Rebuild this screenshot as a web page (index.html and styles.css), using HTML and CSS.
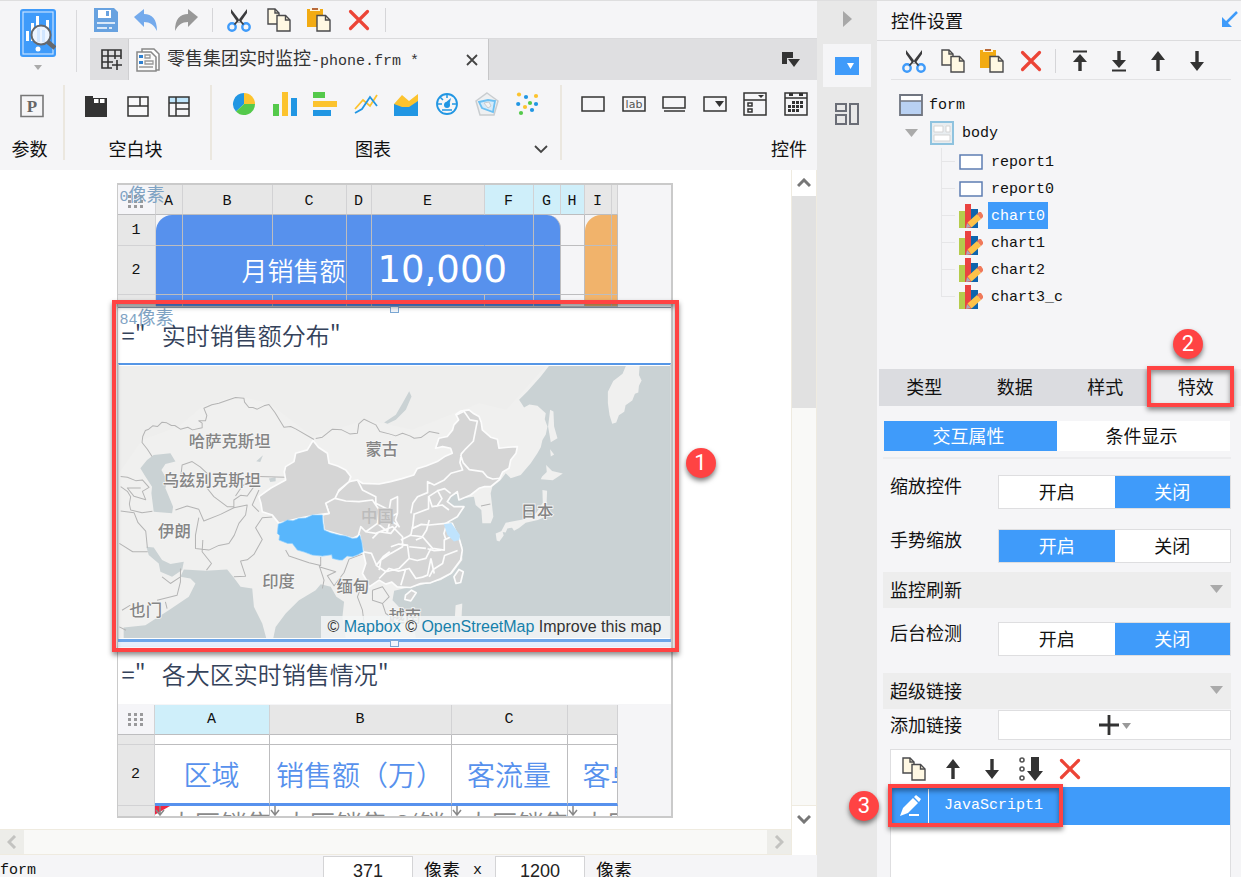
FILE: index.html
```html
<!DOCTYPE html>
<html lang="zh-CN">
<head>
<meta charset="utf-8">
<title>控件设置</title>
<link rel="stylesheet" href="styles.css">
</head>
<body>
<svg class="defs" aria-hidden="true">
  <symbol id="cut" viewBox="0 0 24 24"><path d="M4 1v4l7 10 3-1zM20 1v4l-7 10-3-1z" fill="#3c3c3e"/><circle cx="5" cy="19" r="3.700" fill="none" stroke="#3f9bfa" stroke-width="2.400"/><circle cx="19" cy="19" r="3.700" fill="none" stroke="#3f9bfa" stroke-width="2.400"/><path d="M7.500 16.500l4-4.500M16.500 16.500l-4-4.500" stroke="#3c3c3e" stroke-width="1.800"/></symbol>
  <symbol id="copy" viewBox="0 0 24 24"><path d="M1 1h7l4 4v11H1z" fill="#fff8e3" stroke="#4a4a4c" stroke-width="1.400"/><path d="M8 1v4h4" fill="none" stroke="#4a4a4c" stroke-width="1.400"/><path d="M10 7.500h8.500l4.500 4.500v11H10z" fill="#fff8e3" stroke="#4a4a4c" stroke-width="1.400"/><path d="M18.500 7.500V12H23" fill="none" stroke="#4a4a4c" stroke-width="1.400"/></symbol>
  <symbol id="paste" viewBox="0 0 24 24"><path d="M0 1h16v18H0z" fill="#f2ab13"/><path d="M3 0h10v3H3z" fill="#fff3d6"/><path d="M5 0h6v2H5z" fill="#b8683a"/><path d="M10 7.500h8.500l4.500 4.500v11H10z" fill="#fff8e3" stroke="#4a4a4c" stroke-width="1.400"/><path d="M18.500 7.500V12H23" fill="none" stroke="#4a4a4c" stroke-width="1.400"/></symbol>
  <symbol id="delete" viewBox="0 0 24 24"><path d="M3.500 3.500l17 17M20.500 3.500l-17 17" stroke="#ec4436" stroke-width="3.200" stroke-linecap="round"/></symbol>
  <symbol id="up" viewBox="0 0 24 24"><path d="M12 2l7 9h-5.300v11h-3.400V11H5z" fill="#333"/></symbol>
  <symbol id="down" viewBox="0 0 24 24"><path d="M12 22l7-9h-5.300V2h-3.400v11H5z" fill="#333"/></symbol>
  <symbol id="top" viewBox="0 0 24 24"><path d="M5 1.500h14v2H5zM12 5l7 8h-5.300v9h-3.400v-9H5z" fill="#333"/></symbol>
  <symbol id="bottom" viewBox="0 0 24 24"><path d="M5 20.500h14v2H5zM12 19l7-8h-5.300V2h-3.400v9H5z" fill="#333"/></symbol>
  <symbol id="dots" viewBox="0 0 18 14"><g fill="#9a9a9c"><path d="M1 0h3v3H1zM7 0h3v3H7zM13 0h3v3h-3zM1 5h3v3H1zM7 5h3v3H7zM13 5h3v3h-3zM1 10h3v3H1zM7 10h3v3H7zM13 10h3v3h-3z"/></g></symbol>
  <symbol id="chart" viewBox="0 0 24 24"><path d="M0 7h6v17H0z" fill="#b5cc4c"/><path d="M6 0h6v24H6z" fill="#ea4340"/><path d="M12 5h7v19h-7z" fill="#0e64ad"/><path d="M7 24l1-5 4 4z" fill="#aab"/><path d="M8.500 18.500L18 10l4 5-9.500 8.500z" fill="#fdc249"/><path d="M18 10l2-2h2l2 3v2l-2 2z" fill="#f0795a"/></symbol>
  <symbol id="frame" viewBox="0 0 24 16"><path d="M1 1h22v14H1z" fill="#fff" stroke="#5d7db3" stroke-width="1.500"/></symbol>
  <symbol id="tick" viewBox="0 0 10 10"><path d="M5 0v8M1 4l4 5 4-5" fill="none" stroke="#888" stroke-width="1.500"/></symbol>
</svg>

<div class="app">
  <main class="designer">
    <header class="top">
      <div class="preview">
        <button class="icon-btn" aria-label="预览">
          <svg width="36" height="62" viewBox="0 0 36 62"><rect width="36" height="48" rx="3" fill="#3f9bfa"/><rect x="3" y="3" width="30" height="42" fill="none" stroke="#c4e0ff" stroke-width="1.200"/><g fill="#fff"><path d="M6 22h3v10H6zM11 14h3v18h-3zM16 7h3v25h-3zM21 18h3v14h-3zM26 11h3v21h-3z"/><circle cx="18" cy="40" r="2.500"/></g><circle cx="21" cy="26" r="9.500" fill="#eef5ff" stroke="#65686d" stroke-width="2"/><path d="M17 19h3v14h-3zM22 21h3v12h-3z" fill="#d2e6ff"/><path d="M28 33l7 6" stroke="#65686d" stroke-width="4.500"/><path d="M14 56h8l-4 5z" fill="#aaa"/></svg>
        </button>
      </div>
      <div class="top-right">
        <div class="quick">
          <button class="icon-btn" aria-label="保存"><svg class="i24" viewBox="0 0 24 24"><path d="M0 0h20l4 4v20H0z" fill="#68a2e0"/><path d="M4 2h13v8H4z" fill="#fff"/><path d="M12 3h3v5h-3z" fill="#68a2e0"/><path d="M3 15h18M3 20h10M15 20h3" stroke="#fff" stroke-width="1.500"/></svg></button>
          <button class="icon-btn" aria-label="撤销"><svg class="i24" viewBox="0 0 24 24"><path d="M0 9l10-8v5c8 0 13 5 13 17-3-6-7-9-13-9v5z" fill="#74aaec"/></svg></button>
          <button class="icon-btn" aria-label="重做"><svg class="i24" viewBox="0 0 24 24"><path d="M24 9L14 1v5C6 6 1 11 1 23c3-6 7-9 13-9v5z" fill="#989898"/></svg></button>
          <span class="vsep"></span>
          <button class="icon-btn" aria-label="剪切"><svg class="i24"><use href="#cut"/></svg></button>
          <button class="icon-btn" aria-label="复制"><svg class="i24"><use href="#copy"/></svg></button>
          <button class="icon-btn" aria-label="粘贴"><svg class="i24"><use href="#paste"/></svg></button>
          <button class="icon-btn" aria-label="删除"><svg class="i24"><use href="#delete"/></svg></button>
          <span class="vsep"></span>
        </div>
        <div class="filetabs">
          <button class="icon-btn newtab" aria-label="新建"><svg width="22" height="22" viewBox="0 0 22 22"><path d="M11 19H1V1h19v9M1 7h19M1 13h11M7 1v18M14 1v9M16 11v10M11 16h10" fill="none" stroke="#333" stroke-width="1.600"/></svg></button>
          <div class="filetab">
            <svg class="i24" viewBox="0 0 24 24"><path d="M6 4V1h12l5 5v16h-3" fill="#fff" stroke="#888" stroke-width="1.500"/><path d="M1 4h14l5 5v14H1z" fill="#fafafa" stroke="#888" stroke-width="1.500"/><path d="M3 7h4v3H3zM3 13h4v3H3z" fill="#2f80d0"/><path d="M9 7h5v3H9zM9 13h8v3H9zM3 19h14" fill="none" stroke="#999" stroke-width="1.300"/></svg>
            <span class="fname">零售集团实时监控<span class="mono">-phone.frm *</span></span>
            <button class="icon-btn" aria-label="关闭"><svg width="12" height="12" viewBox="0 0 12 12"><path d="M1 1l10 10M11 1L1 11" stroke="#444" stroke-width="1.800"/></svg></button>
          </div>
          <button class="icon-btn tablist" aria-label="标签列表"><svg width="18" height="16" viewBox="0 0 18 16"><path d="M0 0h11v6H5v6H0z" fill="#333"/><path d="M6 7h12l-6 8z" fill="#333"/></svg></button>
        </div>
      </div>
    </header>

    <section class="ribbon">
      <div class="group g-param">
        <div class="icons"><svg class="i24" viewBox="0 0 24 24"><path d="M1 1.500h22v21H1z" fill="none" stroke="#777" stroke-width="1.600"/><text class="p-glyph" x="12" y="18" text-anchor="middle">P</text></svg></div>
        <div class="gname">参数</div>
      </div>
      <div class="group g-blank">
        <div class="icons">
          <svg class="i24" viewBox="0 0 24 24"><path d="M1 2h8v2h14v19H1z" fill="#333"/><path d="M10 5h4.500v4H10zM16 5h4.500v4H16z" fill="#fff"/></svg>
          <svg class="i24" viewBox="0 0 24 24"><path d="M2 3h20v19H2zM2 12h20M14 3v9" fill="#f8f8fa" stroke="#333" stroke-width="1.500"/></svg>
          <svg class="i24" viewBox="0 0 24 24"><path d="M2 3h20v6H2z" fill="#bfe5fb"/><path d="M2 3h20v19H2zM2 9h20M9 3v19M9 15h13" fill="none" stroke="#333" stroke-width="1.500"/></svg>
        </div>
        <div class="gname">空白块</div>
      </div>
      <div class="group g-chart">
        <div class="icons">
          <svg class="i24" viewBox="0 0 24 24"><path d="M12 12V1a11 11 0 00-8 18.500z" fill="#2196e3"/><path d="M12 12V1a11 11 0 0111 11z" fill="#fcc32e"/><path d="M12 12h11A11 11 0 014 19.500z" fill="#54c94b"/></svg>
          <svg class="i24" viewBox="0 0 24 24"><path d="M0 12h6v12H0z" fill="#54c94b"/><path d="M9 0h6v24H9z" fill="#fcc32e"/><path d="M18 6h6v18h-6z" fill="#2196e3"/></svg>
          <svg class="i24" viewBox="0 0 24 24"><path d="M0 0h12v6H0z" fill="#54c94b"/><path d="M0 9h24v6H0z" fill="#fcc32e"/><path d="M0 18h18v6H0z" fill="#2196e3"/></svg>
          <svg class="i24" viewBox="0 0 24 24"><path d="M1 17l8-9 7 6 7-11" fill="none" stroke="#fcc32e" stroke-width="1.800"/><path d="M1 21l7-4 8-12 7 9" fill="none" stroke="#2196e3" stroke-width="1.800"/></svg>
          <svg class="i24" viewBox="0 0 24 24"><path d="M0 12l8-9 7 6 9-7v22H0z" fill="#fcc32e"/><path d="M0 12l8 3 7 0 9-6v15H0z" fill="#2196e3"/></svg>
          <svg class="i24" viewBox="0 0 24 24"><circle cx="12" cy="12" r="10" fill="none" stroke="#2196e3" stroke-width="1.800"/><path d="M12 2v4M3 12h4M17 12h4M5 5l3 3M7 18h10" stroke="#2196e3" stroke-width="1.500"/><circle cx="12" cy="13" r="3" fill="#2196e3"/><path d="M10 11l6-5-2 8z" fill="#2196e3"/></svg>
          <svg class="i24" viewBox="0 0 24 24"><path d="M12 1l11 8-4 14H5L1 9z" fill="#eef0f2" stroke="#c9cdd0" stroke-width="1.500"/><path d="M4 10l9-2 7 1-2 11-11-4z" fill="#d6ebfa" stroke="#6cc0f2" stroke-width="1.800"/><path d="M9 11l5-1 2 4-3 2z" fill="#f4f4f4" stroke="#c9cdd0"/></svg>
          <svg class="i24" viewBox="0 0 24 24"><g fill="#fcc32e"><circle cx="3" cy="2.500" r="2.100"/><circle cx="20" cy="4" r="2.100"/><circle cx="9" cy="15" r="2.100"/></g><g fill="#2196e3"><circle cx="10" cy="5" r="2.100"/><circle cx="2.200" cy="12" r="2.100"/><circle cx="20" cy="12" r="2.100"/><circle cx="16" cy="18" r="2.100"/></g><g fill="#54c94b"><circle cx="14" cy="11" r="2.100"/><circle cx="5" cy="21" r="2.100"/></g></svg>
        </div>
        <div class="gname">图表
          <button class="icon-btn more" aria-label="更多"><svg width="14" height="9" viewBox="0 0 14 9"><path d="M1 1l6 6 6-6" fill="none" stroke="#444" stroke-width="1.800"/></svg></button>
        </div>
      </div>
      <div class="group g-widget">
        <div class="icons">
          <svg class="i24" viewBox="0 0 24 24"><path d="M1 5h22v14H1z" fill="none" stroke="#333" stroke-width="1.500"/></svg>
          <svg class="i24" viewBox="0 0 24 24"><path d="M1 5h22v14H1z" fill="none" stroke="#333" stroke-width="1.500"/><text class="lab-glyph" x="12" y="16" text-anchor="middle">lab</text></svg>
          <svg class="i24" viewBox="0 0 24 24"><path d="M1 5h22v11H1zM2 19h21" fill="none" stroke="#333" stroke-width="1.500"/></svg>
          <svg class="i24" viewBox="0 0 24 24"><path d="M1 5h22v14H1z" fill="none" stroke="#333" stroke-width="1.500"/><path d="M12 9h9l-4.500 6z" fill="#333"/></svg>
          <svg class="i24" viewBox="0 0 24 24"><path d="M1 1h22v22H1zM1 8h22M5 11h4v3H5zM5 17h4v3H5z" fill="none" stroke="#333" stroke-width="1.500"/><path d="M15 3h6l-3 3z" fill="#333"/></svg>
          <svg class="i24" viewBox="0 0 24 24"><path d="M1 1h22v22H1zM1 6h22" fill="none" stroke="#333" stroke-width="1.500"/><path d="M5 1h4v3H5zM15 1h4v3h-4zM8 9h3v3H8zM12 9h3v3h-3zM16 9h3v3h-3zM4 13h3v3H4zM8 13h3v3H8zM12 13h3v3h-3zM16 13h3v3h-3zM4 17h3v3H4zM8 17h3v3H8zM12 17h3v3h-3z" fill="#333"/></svg>
        </div>
        <div class="gname">控件</div>
      </div>
    </section>

    <div class="work">
      <div class="viewport">
        <div class="canvas">
          <div class="phone">
            <section class="block kpi">
              <span class="px-label"><span class="mono">0</span>像素</span>
              <table class="sheet">
                <colgroup><col class="w38"><col class="w27"><col class="w90"><col class="w74"><col class="w25"><col class="w113"><col class="w49"><col class="w27"><col class="w24"><col class="w27"><col class="w6"></colgroup>
                <tr class="letters"><th class="corner"><svg width="18" height="14"><use href="#dots"/></svg></th><th>A</th><th>B</th><th>C</th><th>D</th><th>E</th><th class="on">F</th><th class="on">G</th><th class="on">H</th><th>I</th><th></th></tr>
                <tr class="r1"><th>1</th><td class="blue round-l"></td><td class="blue"></td><td class="blue"></td><td class="blue"></td><td class="blue plain"></td><td class="blue"></td><td class="blue round-r"></td><td></td><td class="orange round-l"></td><td class="orange"></td></tr>
                <tr class="r2"><th>2</th><td class="blue"></td><td class="blue caption" colspan="2">月销售额</td><td class="blue"></td><td class="blue figure" colspan="2">10,000</td><td class="blue"></td><td></td><td class="orange"></td><td class="orange"></td></tr>
                <tr class="r3"><th></th><td class="blue"></td><td class="blue"></td><td class="blue"></td><td class="blue"></td><td class="blue"></td><td class="blue"></td><td class="blue"></td><td></td><td class="orange"></td><td class="orange"></td></tr>
              </table>
            </section>

            <section class="block selected">
              <span class="px-label"><span class="mono">84</span>像素</span>
              <h2 class="formula">="&nbsp;&nbsp;&nbsp;实时销售额分布"</h2>
              <div class="mapbox">
                <svg class="map" viewBox="21 18 1650 816" preserveAspectRatio="xMidYMid slice">
                  <rect x="21" y="18" width="1650" height="816" fill="#f0f0ef"/>
                  <path d="M21 18H1300L1180 150 1100 130 900 210 760 180 600 230 470 130 370 108 270 140 200 200 90 240 21 340z" fill="#eeeeed"/>
                  <g fill="#cad2d4">
                    <path d="M85 325L105 300 125 285 175 280 190 305 160 312 148 330 165 360 160 385 183 440 180 460 125 455 118 400 120 380 100 350z"/>
                    <path d="M432 304l20-18-8 20zM470 356l20-4v12l-16 2z"/>
                    <path d="M103 560l22 2 25 38 25 12 40-7-5 25-30 20-35-15-5-25-30-25z"/>
                    <path d="M215 628l65 4 65-4 20 25 20 27 35 5 5 55 25 50 12 44H35V802l65-7 70-45 60-40 20-40-15-15-30-5z"/>
                    <path d="M483 834l7-34 30-40 40-40 50-30 15-18 30 8 17 30 23 15-5 45 10 64z"/>
                    <path d="M815 188l35-23 20-35 20-36 7 16-17 40-30 30-25 12z"/>
                    <path d="M1309 18L1284 50 1244 95 1219 120 1226 130 1234 143 1250 134 1274 138 1299 160 1296 178 1304 200 1299 224 1289 240 1284 262 1274 280 1254 310 1224 345 1194 355 1179 340 1164 360 1139 380 1134 400 1142 470 1134 490 1109 490 1106 450 1089 435 1084 410 1049 415 1034 400 1014 410 1004 425 1024 440 1054 440 1034 470 999 490 1019 490 1041 540 1049 560 1049 600 1019 640 984 660 944 670 904 680 874 685 845 692 840 720 870 752 900 780 910 834H1671V18z"/>
                  </g>
                  <g fill="#f0f0ef">
                    <path d="M1539 18l-10 24-28 22-16 32v34l5 36 8 26 12-4 8-22 16-10 4-20 20-14 8-20 10-4 2-20 8-16-8-16 2-28z"/>
                    <path d="M1312 150l10 5 2 45 10 35-20 12-8-47zM1312 268l12 16-10 6z"/>
                    <path d="M1300 315l18 18 32 8-30 20-36-3 4-8 14-14z"/>
                    <path d="M1289 390l14 2-2 48 10 25-36 15-36 8-20 16-15 8-6-9-14 2-5 12-14-2 14-27 55-10 36-18 20-32z"/>
                    <path d="M1149 520l20-8 4 14-13 18-8-3z"/>
                    <path d="M1029 735l20-5-2 38h-20z"/>
                  </g>
                  <g fill="none" stroke="#b4b4b4" stroke-width="3" stroke-linejoin="round">
                    <path d="M120 290l-14-22-16-20 2-18 8-18 10-4 12-10 14 2 14-13 14 2 14 8 10 0 17 11 22-6 14 8 29-6 0-14-10-7 20 0 4-16-9-22 24-10 21-5 30-10 20-7 25 2 2 12 13 16 12 0 13 5 20-10 15-4 18 24 27 44 20-2 15 7 55 32"/>
                    <path d="M610 236l20-4 30-24 28 2 24 12 23-2 4-28 16-14 35 17 12 20 28 7 20 6 20-8 22 8 13 7 20-2 25-18 30 6"/>
                    <path d="M206 350l4-35 30-10 24 16 21 19 0 45 20 25 40 30 20 0 0-20 20-14 20 2 20-28-20-12-15 10-20 30M440 350l80 2M190 450l35-12 35 10 15 35 50-20 40-20 40-8-5 30-20 25-14 36-16 24-30 6-30 14-40-5 0-40 10-52M440 390l-20 45 20 20M26 350l20 2 25 10 20-2 20 22-20 12 10 25-35-10-20-25 40 0M26 380l20 14 10 16-4 22 4 18 34 8 31-4M26 453l40 5 12 30 23 25 5 50M22 550l40 25 45 0M272 540l-2 35 28 35-15 20M365 650l35-2-15-45 20-4 20-16 25-45-20-35 20-30 30-2M205 625l0 40-10 40-60 15M160 725l5 20M205 650l-30 20-25-20"/>
                    <path d="M520 570l10 18 60 20 35 8 0-25M620 615l15 45-5 25M620 620l50 15-25 12 20 30 30-40 15-40 40-15M750 670l-15 40 15 40 5 40 20 30M780 690l30-10 20 30-20 20 10 30 30 20M780 690l0 30 30 10M1105 438l28-6M30 750l25-15M22 800l20 10"/>
                  </g>
                  <g stroke="#fcfcfc" stroke-width="5" stroke-linejoin="round" fill="#d5d5d5">
                    <path d="M710 365L735 360 750 370 800 372 834 365 868 356 904 345 914 326 940 318 974 305 996 290 1019 280 1014 265 990 260 969 265 979 235 1004 230 1020 210 1024 195 1038 180 1030 164 1044 154 1069 150 1084 162 1099 170 1106 188 1109 210 1134 232 1154 238 1159 265 1186 262 1214 260 1210 280 1194 300 1189 325 1170 336 1159 360 1134 380 1116 380 1099 385 1074 405 1039 420 1034 395 1014 410 1004 425 1024 440 1054 440 1034 470 999 490 1019 490 1041 540 1049 570 1044 600 1014 640 984 656 954 668 924 670 894 682 854 680 838 666 820 672 800 660 770 680 762 660 750 640 760 610 752 575 742 525 720 535 635 510 630 465 650 460 640 430z"/>
                    <path d="M602 242L618 262 645 280 650 310 676 318 700 330 715 350 710 365 680 390 668 415 640 430 650 460 610 465 560 475 500 490 480 465 450 455 446 430 440 410 476 384 520 360 516 336 520 320 545 305 550 280 585 270z"/>
                    <path d="M1039 628l13 7-8 32-14 3-6-20z"/><path d="M879 705l18-15 14 8-16 24-18-4z"/>
                  </g>
                  <g fill="none" stroke="#fcfcfc" stroke-width="5" stroke-linejoin="round">
                    <path d="M668 415l32 8 40 2 40-5 20 30-5 40-35 25-15-15-10 35M735 360l15 30 40 20 0 20 40 20 0 30 25 15-20 25-35-5-20 20M795 490l30 25 10-45 20-10 0-50-20 10-5 30M855 460l-6 20 12 22M895 460l6-30 14-20 30-12 0-33 20 10 30-15 20-20 35-10-8-22 4-26 14-16 22-22 8-40 4-20-22-4-18-26-24 12M1044 285l8 24 18 20 40 6 14 16 16 6 24-2M1014 400l-18-14-20 6-28 18 0 36-42 16M974 390l14 26-16 24M949 410l10 30 30-5 20 15M900 500l-5 25-30 15M905 460l-5 45 26-12 24 2 50-5M950 480l-8 30-14 22-18 8M890 525l40 5 30 35 35 5 0-30 20-10M835 560l24-8 26 3 5 40 24 6 26-6 15-30M760 515l30 5 50-20 30 30 0 30-35 20-30 20-5 30M752 575l25 5 15 35 20-25 20-15M790 615l30 20 40-10 30-30M800 655l30-30 28 8 32-8 20 30 20-4 15-6 10-50M950 650l12-22 28-18 6-24 39-15M955 595l10 45M890 560l50 5M880 625l-15 50M1000 500l-6 20 6 20M985 570l-20 2-20-6"/>
                  </g>
                  <path d="M498 492L510 488 525 480 542 482 560 475 580 474 600 465 630 465 632 490 635 510 654 518 680 525 700 528 720 535 734 534 742 525 748 546 752 575 736 584 720 590 704 588 690 600 680 600 660 595 658 584 630 588 600 585 576 576 555 570 540 550 526 550 500 540 502 526 495 520z" fill="#58b6fc" stroke="#8fd0ff" stroke-width="2"/>
                  <path d="M994 493l22-4 26 36-2 15-16 4-20-20z" fill="#bfe3fd"/>
                  <g class="places">
                    <text x="230" y="262">哈萨克斯坦</text><text x="152" y="379">乌兹别克斯坦</text><text x="759" y="286">蒙古</text><text x="138" y="530">伊朗</text><text x="450" y="681">印度</text><text x="672" y="696">缅甸</text><text x="52" y="767">也门</text><text x="1224" y="472">日本</text><text x="828" y="786">越南</text><text x="746" y="485" class="faint">中国</text>
                  </g>
                </svg>
                <p class="credit">© <a href="#mapbox">Mapbox</a> © <a href="#osm">OpenStreetMap</a> Improve this map</p>
              </div>
              <div class="grip"><i></i></div>
              <i class="handle"></i>
              <div class="mark mark-map"></div>
              <span class="badge badge-map">1</span>
            </section>

            <section class="block regions">
              <h2 class="formula">="&nbsp;&nbsp;&nbsp;各大区实时销售情况"</h2>
              <table class="sheet white">
                <colgroup><col class="w37"><col class="w115"><col class="w182"><col class="w116"><col class="w50"></colgroup>
                <tr class="letters"><th class="corner"><svg width="18" height="14"><use href="#dots"/></svg></th><th class="on">A</th><th>B</th><th>C</th><th></th></tr>
                <tr class="s1"><th></th><td></td><td></td><td></td><td></td></tr>
                <tr class="s2"><th>2</th><td>区域</td><td>销售额（万）</td><td>客流量</td><td class="cut"><div>客单价</div></td></tr>
                <tr class="s3"><th></th><td><div class="flag"><svg width="10" height="10"><use href="#tick"/></svg><span>大区销售</span></div></td><td><div><svg width="10" height="10"><use href="#tick"/></svg><span>大区销售.S(销</span></div></td><td><div><svg width="10" height="10"><use href="#tick"/></svg><span>大区销售</span></div></td><td><div><svg width="10" height="10"><use href="#tick"/></svg><span>大区销售</span></div></td></tr>
              </table>
            </section>
          </div>
        </div>
        <div class="hscroll">
          <button class="icon-btn" aria-label="向左"><svg width="10" height="14" viewBox="0 0 10 14"><path d="M8 1L2 7l6 6" fill="none" stroke="#c3c3c0" stroke-width="3"/></svg></button>
          <span></span>
          <button class="icon-btn" aria-label="向右"><svg width="10" height="14" viewBox="0 0 10 14"><path d="M2 1l6 6-6 6" fill="none" stroke="#c3c3c0" stroke-width="3"/></svg></button>
        </div>
      </div>
      <div class="vscroll">
        <button class="icon-btn" aria-label="向上"><svg width="14" height="10" viewBox="0 0 14 10"><path d="M1 8l6-6 6 6" fill="none" stroke="#777" stroke-width="3"/></svg></button>
        <span class="thumb"></span>
        <span class="track"></span>
        <button class="icon-btn last" aria-label="向下"><svg width="14" height="10" viewBox="0 0 14 10"><path d="M1 2l6 6 6-6" fill="none" stroke="#777" stroke-width="3"/></svg></button>
      </div>
    </div>

    <footer class="status">
      <span class="mono st-name">form</span>
      <input type="text" value="371" id="pw" aria-label="宽度"><label for="pw">像素</label><span class="mono times">x</span>
      <input type="text" value="1200" id="ph" aria-label="高度"><label for="ph">像素</label>
    </footer>
  </main>

  <nav class="rail">
    <button class="icon-btn fold" aria-label="收起"><svg width="9" height="16" viewBox="0 0 9 16"><path d="M0 0l9 8-9 8z" fill="#a8a8a8"/></svg></button>
    <button class="icon-btn tile" aria-label="控件设置"><svg width="24" height="18" viewBox="0 0 24 18"><path d="M0 0h24v18H0z" fill="#3f9bfa"/><path d="M12 6h7l-3.500 6z" fill="#fff"/></svg></button>
    <button class="icon-btn lay" aria-label="组件库"><svg width="24" height="22" viewBox="0 0 24 22"><path d="M1 1h10v7H1zM1 12h10v9H1zM15 1h8v20h-8z" fill="none" stroke="#6a6d76" stroke-width="2"/></svg></button>
  </nav>

  <aside class="panel">
    <header class="ptitle"><h1>控件设置</h1><svg width="17" height="17" viewBox="0 0 17 17"><path d="M16 1L5 12" stroke="#3f9bfa" stroke-width="2.500"/><path d="M1 6v10h10z" fill="#3f9bfa"/></svg></header>
    <div class="ptools">
      <button class="icon-btn" aria-label="剪切"><svg class="i24"><use href="#cut"/></svg></button>
      <button class="icon-btn" aria-label="复制"><svg class="i24"><use href="#copy"/></svg></button>
      <button class="icon-btn" aria-label="粘贴"><svg class="i24"><use href="#paste"/></svg></button>
      <button class="icon-btn" aria-label="删除"><svg class="i24"><use href="#delete"/></svg></button>
      <span class="vsep"></span>
      <button class="icon-btn" aria-label="置顶"><svg class="i24"><use href="#top"/></svg></button>
      <button class="icon-btn" aria-label="置底"><svg class="i24"><use href="#bottom"/></svg></button>
      <button class="icon-btn" aria-label="上移"><svg class="i24"><use href="#up"/></svg></button>
      <button class="icon-btn" aria-label="下移"><svg class="i24"><use href="#down"/></svg></button>
    </div>
    <div class="tree mono">
      <div class="node root"><svg width="24" height="22" viewBox="0 0 24 22"><path d="M1 1h22v20H1z" fill="#b9d1f3" stroke="#707580" stroke-width="1.800"/><path d="M2 2h20v5H2z" fill="#fff"/><path d="M1 7h22" stroke="#707580" stroke-width="1.500"/></svg><span>form</span></div>
      <div class="node child"><svg width="13" height="8" viewBox="0 0 13 8"><path d="M0 0h13L6.500 8z" fill="#aaa"/></svg><svg class="i24 bodyicon" viewBox="0 0 24 24"><path d="M1 1h22v22H1z" fill="#e8edf0" stroke="#8fc3df" stroke-width="2"/><path d="M4 5h9v6H4zM16 5h4v6h-4zM4 14h16v6H4z" fill="#fff" stroke="#d5d5d5"/></svg><span>body</span></div>
      <ul>
        <li class="node"><svg width="24" height="16"><use href="#frame"/></svg><span>report1</span></li>
        <li class="node"><svg width="24" height="16"><use href="#frame"/></svg><span>report0</span></li>
        <li class="node active"><svg class="i24"><use href="#chart"/></svg><span>chart0</span></li>
        <li class="node"><svg class="i24"><use href="#chart"/></svg><span>chart1</span></li>
        <li class="node"><svg class="i24"><use href="#chart"/></svg><span>chart2</span></li>
        <li class="node"><svg class="i24"><use href="#chart"/></svg><span>chart3_c</span></li>
      </ul>
    </div>
    <div class="ptabs">
      <button>类型</button><button>数据</button><button>样式</button><button class="sel">特效</button>
      <div class="mark mark-tab"></div>
      <span class="badge badge-tab">2</span>
    </div>
    <div class="subtabs"><button class="sel">交互属性</button><button>条件显示</button></div>
    <form class="props">
      <div class="prop"><span class="plabel">缩放控件</span><div class="seg"><label><input type="radio" name="zoom"><span>开启</span></label><label><input type="radio" name="zoom" checked><span>关闭</span></label></div></div>
      <div class="prop"><span class="plabel">手势缩放</span><div class="seg"><label><input type="radio" name="pinch" checked><span>开启</span></label><label><input type="radio" name="pinch"><span>关闭</span></label></div></div>
      <button type="button" class="fold-head first">监控刷新<svg width="13" height="8" viewBox="0 0 13 8"><path d="M0 0h13L6.500 8z" fill="#aaa"/></svg></button>
      <div class="prop"><span class="plabel">后台检测</span><div class="seg"><label><input type="radio" name="poll"><span>开启</span></label><label><input type="radio" name="poll" checked><span>关闭</span></label></div></div>
      <button type="button" class="fold-head">超级链接<svg width="13" height="8" viewBox="0 0 13 8"><path d="M0 0h13L6.500 8z" fill="#aaa"/></svg></button>
      <div class="prop addrow"><label class="plabel" for="add">添加链接</label><button type="button" id="add" class="add"><svg width="32" height="20" viewBox="0 0 32 20"><path d="M10 0v20M0 10h20" stroke="#333" stroke-width="2.800"/><path d="M23 8h9l-4.500 6z" fill="#999"/></svg></button></div>
    </form>
    <div class="links">
      <div class="ltools">
        <button class="icon-btn" aria-label="复制"><svg class="i24"><use href="#copy"/></svg></button>
        <button class="icon-btn" aria-label="上移"><svg class="i24"><use href="#up"/></svg></button>
        <button class="icon-btn" aria-label="下移"><svg class="i24"><use href="#down"/></svg></button>
        <button class="icon-btn" aria-label="排序"><svg class="i24" viewBox="0 0 24 24"><g fill="none" stroke="#555" stroke-width="1.600"><circle cx="3" cy="3" r="2"/><circle cx="3" cy="12" r="2"/><circle cx="3" cy="21" r="2"/></g><path d="M12 0h8v14h4l-8 10-8-10h4z" fill="#333"/></svg></button>
        <button class="icon-btn" aria-label="删除"><svg class="i24"><use href="#delete"/></svg></button>
      </div>
      <div class="link">
        <button class="icon-btn edit" aria-label="编辑"><svg width="22" height="22" viewBox="0 0 22 22"><path d="M1 21l3-8L14 3l5 5L9 18z" fill="#fff"/><path d="M15 2l2-2 5 4-2 3zM10 19h10v2H10z" fill="#fff"/></svg></button>
        <span class="mono lname">JavaScript1</span>
        <div class="mark mark-link"></div>
        <span class="badge badge-link">3</span>
      </div>
    </div>
  </aside>
</div>
</body>
</html>
```
FILE: styles.css
```css
* { box-sizing: border-box; }
body {
  margin: 0;
  overflow: hidden;
  background: #f5f5f7;
  color: #111;
  font: 18px/24px "Noto Sans CJK SC", sans-serif;
}
button { font: inherit; color: inherit; border: 0; padding: 0; background: none; }
svg { display: block; flex: none; }
h1, h2, p, ul { margin: 0; padding: 0; font: inherit; }
ul { list-style: none; }
.defs { position: absolute; width: 0; height: 0; }
.i24 { width: 24px; height: 24px; }
.icon-btn { display: flex; align-items: center; justify-content: center; }
.mono { font-family: "Liberation Mono", "Noto Sans CJK SC", monospace; font-size: 15px; }
.vsep { width: 1px; height: 24px; background: #d5d5d8; }

.app { display: flex; height: 100vh; border-top: 1px solid #dededf; }
.designer { flex: 1; min-width: 0; display: flex; flex-direction: column; }

/* Header */
.top { display: flex; height: 79px; flex: none; }
.preview { width: 90px; padding: 8px 0 0 20px; background: linear-gradient(#d9d9dc, #d9d9dc) no-repeat 76px 9px / 1px 62px; }
.top-right { flex: 1; display: flex; flex-direction: column; }
.quick { height: 37px; display: flex; align-items: center; gap: 16px; padding-left: 4px; }
.quick .vsep { margin: 0 -2px; }
.filetabs { flex: 1; display: flex; background: #dfdfe1; border-top: 1px solid #dadadc; }
.newtab { width: 39px; padding-left: 5px; border-right: 1px solid #cfcfd1; }
.filetab { width: 360px; display: flex; align-items: center; padding: 0 10px 0 7px; background: #f5f5f7; border-right: 1px solid #c6c6c8; }
.fname { flex: 1; margin-left: 7px; white-space: pre; color: #333; }
.tablist { margin-left: auto; padding-right: 17px; }

/* Ribbon */
.ribbon { display: flex; flex: none; height: 90px; padding: 5px 0 10px; }
.group { display: flex; flex-direction: column; border-right: 2px solid #ebe7df; }
.icons { display: flex; justify-content: space-between; align-items: center; height: 40px; }
.gname { position: relative; flex: 1; display: flex; align-items: center; justify-content: center; padding: 13px 4px 0 0; }
.g-param { width: 65px; padding: 0 6px; }
.g-param .icons { justify-content: center; padding-top: 4px; }
.g-blank { width: 147px; padding: 0 19px; }
.g-blank .icons { padding-top: 4px; }
.g-chart { width: 350px; padding: 0 20px; }
.g-chart .gname { padding-right: 26px; }
.g-widget { flex: 1; border: 0; padding: 0 9px 0 19px; }
.g-widget .gname { justify-content: flex-end; padding-right: 1px; }
.more { position: absolute; right: -8px; bottom: 6px; }
.p-glyph { font: bold 17px "Liberation Serif", serif; fill: #666; }
.lab-glyph { font: 11px "DejaVu Sans", sans-serif; fill: #555; }

/* Work area */
.work { flex: 1; min-height: 0; display: flex; }
.viewport { flex: 1; min-width: 0; display: flex; flex-direction: column; }
.canvas { flex: 1; min-height: 0; padding: 13px 2px 0 0; display: flex; justify-content: center; align-items: flex-start; background: #fff; }
.phone { width: 556px; border: 2px solid #cacaca; border-left-width: 1px; background: #fff; }
.block { position: relative; }
.kpi { background: #f5f5f7; }
.px-label { position: absolute; z-index: 2; left: 2px; top: -4px; color: #7fa3c4; }
.formula { height: 55px; padding-left: 4px; font-size: 24px; line-height: 54px; font-weight: 350; color: #34425a; white-space: nowrap; }

.sheet { width: 500px; table-layout: fixed; border-collapse: separate; border-spacing: 0; }
.sheet th, .sheet td { padding: 0; border-right: 1px solid #bdbdbf; border-bottom: 1px solid #bdbdbf; overflow: hidden; }
.sheet th { background: #e7e7e7; border-color: #d2d2d4; font: 15px/20px "Liberation Mono", monospace; color: #111; }
.letters th { border-bottom-color: #bdbdbf; }
.sheet .letters th.on { background: #cfeffa; }
.sheet .letters .corner { background: #f5f5f8; }
.corner svg { margin: 0 auto; }
.sheet .blue { background: #5791ed; }
.sheet .orange { background: #f1b36b; }
.sheet .plain { border-right-color: #5791ed; }
.sheet .round-l { border-top-left-radius: 16px; }
.sheet .round-r { border-top-right-radius: 14px; }
.sheet .caption { font-size: 26px; font-weight: 350; line-height: 40px; color: #fff; text-align: right; }
.sheet .figure { padding-left: 6px; font: 37px/46px "DejaVu Sans", sans-serif; color: #fff; }
.w38 { width: 38px; } .w27 { width: 27px; } .w90 { width: 90px; } .w74 { width: 74px; } .w25 { width: 25px; }
.w113 { width: 113px; } .w49 { width: 49px; } .w24 { width: 24px; } .w6 { width: 6px; }
.w37 { width: 37px; } .w115 { width: 115px; } .w182 { width: 182px; } .w116 { width: 116px; } .w50 { width: 50px; }
.letters { height: 30px; }
.kpi .letters th { padding-top: 5px; }
.r1 { height: 31px; }
.r1 th, .r2 th { padding-top: 2px; }
.r2 { height: 49px; }
.r3 { height: 12px; }

/* Selected map block */
.selected { border-top: 1px solid #8e9aab; }
.mapbox { position: relative; border: solid #dcdcde; border-width: 2px 1px 0; border-top-color: #5596e6; padding: 1px 0 1px; background: #fff; }
.map { width: 100%; height: 272px; }
.places { font: 500 49px "Noto Sans CJK SC", sans-serif; fill: #858585; stroke: #f6f6f6; stroke-width: 5px; paint-order: stroke; }
.places .faint { fill: #bcbcbc; stroke: #d5d5d5; }
.credit { position: absolute; right: 0; bottom: 1px; padding: 0 8px 0 7px; background: rgba(243, 246, 246, 0.85); color: #333; font: 16px/22px "Liberation Sans", sans-serif; white-space: nowrap; }
.credit a { color: #1780ab; text-decoration: none; }
.grip { height: 8px; border-top: 3px solid #6ea6e8; background: #e6effb; }
.grip i, .handle { position: absolute; left: 50%; width: 9px; height: 7px; margin-left: -4px; border: 1px solid #7ca8d4; background: #f2f6fb; }
.grip i { bottom: 0; }
.handle { top: -2px; }
.mark { position: absolute; z-index: 3; border: 4px solid #ff4343; box-shadow: 0 3px 5px rgba(0, 0, 0, 0.45), inset 0 3px 5px rgba(0, 0, 0, 0.4); pointer-events: none; }
.mark-map { left: -6px; right: -8px; top: -8px; bottom: -5px; }
.badge { position: absolute; z-index: 3; width: 30px; height: 30px; border-radius: 50%; background: #ff4343; color: #fff; font: 22px/30px Roboto, sans-serif; text-align: center; box-shadow: 0 3px 5px rgba(0, 0, 0, 0.5); }
.badge-map { right: -45px; top: 140px; }

/* Region table */
.regions { background: linear-gradient(#fff, #fff) no-repeat 0 0 / 100% 57px, #f5f5f7; }
.regions .formula { height: 58px; }
.white td { background: #fff; text-align: center; font-size: 28px; line-height: 40px; font-weight: 350; color: #5791ed; }
.s1 { height: 10px; }
.s2 { height: 61px; }
.sheet .s2 td { border-bottom: 3px solid #5791ed; }
.s2 .cut div { padding-left: 15px; white-space: nowrap; text-align: left; }
.s3 { height: 10px; }
.sheet .s3 td, .sheet .s3 th { border-bottom: 0; }
.s3 div { display: flex; height: 10px; overflow: hidden; }
.s3 span { margin-left: 4px; font-size: 26px; line-height: 34px; color: #8a8a8a; white-space: nowrap; }
.flag { background: linear-gradient(150deg, #ee2745 7px, transparent 8px); }

.hscroll { display: flex; height: 26px; flex: none; background: #f9f9f7; border: solid #efebe0; border-width: 1px 0; }
.hscroll span { flex: 1; }
.hscroll button { width: 24px; background: #edede9; }
.vscroll { width: 26px; display: flex; flex-direction: column; background: #fff; border-right: 1px solid #efebe0; border-left: 1px solid #efebe0; }
.vscroll button { height: 26px; }
.vscroll .thumb { height: 212px; background: #e1e1e1; }
.vscroll .track { flex: 1; background: #f9f9f7; border-bottom: 1px solid #efebe0; }
.vscroll .last { height: 49px; align-items: flex-start; padding-top: 8px; }

.status { flex: none; height: 22px; display: flex; align-items: flex-start; overflow: hidden; line-height: 28px; white-space: nowrap; }
.st-name { width: 323px; padding-top: 2px; }
.status input { width: 90px; height: 30px; margin: 1px 11px 0 0; padding: 0; border: 1px solid #d4d4d6; background: #fff; color: #222; text-align: center; font: 18px/26px "Liberation Sans", sans-serif; }
.times { width: 35px; padding-top: 2px; text-align: center; }

/* Side rail */
.rail { width: 60px; flex: none; display: flex; flex-direction: column; align-items: center; background: #e8e8e8; }
.fold { height: 43px; padding-bottom: 7px; }
.tile { width: 48px; height: 43px; background: #f5f5f7; }
.lay { height: 53px; }

/* Settings panel */
.panel { width: 364px; flex: none; display: flex; flex-direction: column; min-height: 0; }
.ptitle { flex: none; height: 40px; display: flex; align-items: center; justify-content: space-between; padding: 0 3px 2px 14px; border-bottom: 1px solid #dcdcde; }
.ptools { flex: none; height: 39px; display: flex; align-items: center; gap: 15px; margin: 0 10px 0 14px; padding: 2px 0 0 11px; border-bottom: 1px solid #e2e2e4; }
.ptools .vsep { margin: 0 -3px; }
.tree { height: 289px; flex: none; padding: 11px 0 0 22px; color: #111; }
.node { display: flex; align-items: center; height: 27px; }
.node > span { padding: 2px 3px 0; line-height: 25px; }
.root span { margin-left: 3px; }
.child { height: 29px; padding-left: 6px; }
.child .bodyicon { margin-left: 12px; }
.child span { margin-left: 5px; }
.tree ul { margin: 1px 0 0 42px; background: linear-gradient(#e6e6e8, #e6e6e8) no-repeat 0 0 / 1px 149px; }
.tree li { padding-left: 18px; background: linear-gradient(#e6e6e8, #e6e6e8) no-repeat 0 13px / 14px 1px; }
.tree li > span { margin-left: 5px; }
.tree .active > span { background: #3f9bfa; color: #fff; }

.ptabs { position: relative; flex: none; display: grid; grid-template-columns: repeat(4, 1fr); height: 37px; margin-left: 2px; background: #dbdce0; }
.ptabs button { height: 37px; padding-bottom: 4px; }
.ptabs .sel { background: #f0f0f2; }
.mark-tab { right: 7px; width: 87px; top: -3px; bottom: -1px; }
.badge-tab { right: 38px; top: -40px; }
.subtabs { flex: none; display: grid; grid-template-columns: 1fr 1fr; margin: 15px 11px 0 7px; background: #fff; }
.subtabs button { height: 30px; padding: 0 4px 2px 0; }
.subtabs .sel { background: #3f9bfa; color: #fff; }
.props { flex: none; margin: 6px 10px 0 6px; padding-top: 16px; border-top: 2px solid #ececee; }
.prop { display: flex; height: 34px; margin-bottom: 20px; padding-left: 7px; }
.plabel { width: 108px; line-height: 20px; }
.seg { flex: 1; display: flex; border: 1px solid #dedee0; background: #fff; }
.seg label { flex: 1; position: relative; }
.seg input { position: absolute; inset: 0; margin: 0; opacity: 0; }
.seg span { display: block; height: 32px; line-height: 30px; text-align: center; }
.seg input:checked + span { background: #3f9bfa; color: #fff; }
.fold-head { display: flex; align-items: center; justify-content: space-between; width: 100%; height: 36px; margin: -3px 0 1px; padding: 0 8px 2px 7px; background: #ededed; }
.first { margin: -11px 0 14px; }
.addrow { height: 30px; margin-bottom: 0; }
.addrow .plabel { line-height: 28px; }
.add { flex: 1; display: flex; align-items: center; justify-content: center; background: #fff; border: 1px solid #dedee0; }
.links { flex: 1; margin: 9px 10px 0 13px; border: 1px solid #dedee0; border-bottom: 0; background: #fff; }
.ltools { display: flex; align-items: center; gap: 15px; height: 37px; padding-left: 11px; }
.link { position: relative; display: flex; align-items: center; height: 38px; background: #3f9bfa; color: #fff; }
.edit { width: 38px; height: 34px; border-right: 1px solid #fff; }
.lname { margin-left: 15px; }
.mark-link { left: -3px; top: -3px; bottom: -2px; width: 175px; }
.badge-link { left: -42px; top: 4px; }
```
